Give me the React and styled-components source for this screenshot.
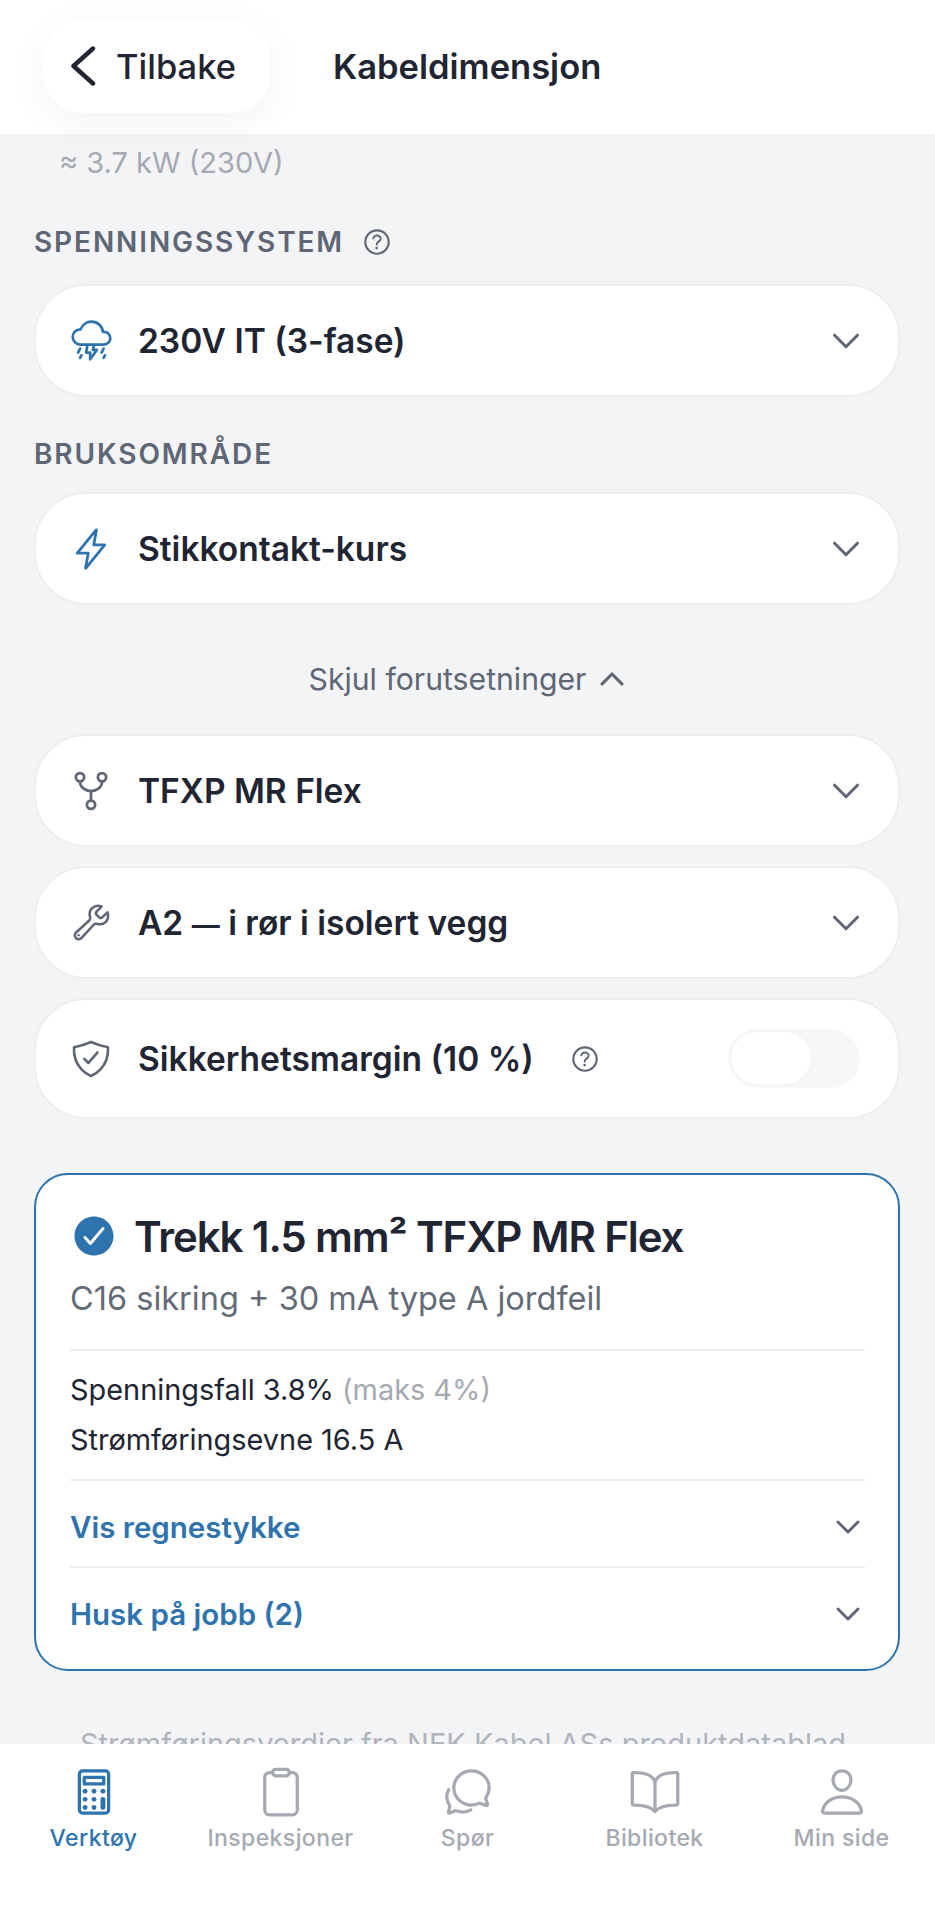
import React from 'react';
import styled, { createGlobalStyle } from 'styled-components';
import { ChevronDown, ChevronUp } from 'lucide-react';
import {
  IoBookOutline,
  IoBuildOutline,
  IoCalculatorOutline,
  IoChatbubblesOutline,
  IoCheckmarkCircle,
  IoClipboardOutline,
  IoFlashOutline,
  IoGitNetworkOutline,
  IoHelpCircleOutline,
  IoPersonOutline,
  IoShieldCheckmarkOutline,
  IoThunderstormOutline,
} from 'react-icons/io5';

const INK = '#1f2533';
const BLUE = '#2e73ae';
const SLATE = '#5f6675';
const MUTED = '#a5a9b2';
const LINE = '#eceef0';

const GlobalStyle = createGlobalStyle`
  html, body { margin: 0; padding: 0; background: #f3f4f6; }
  * { box-sizing: border-box; }
  body { font-family: Inter, "Liberation Sans", sans-serif; }
`;

const Screen = styled.div`
  width: 935px;
  height: 1920px;
  display: flex;
  flex-direction: column;
  overflow: hidden;
  background: #f3f4f6;
`;

const Header = styled.header`
  position: relative;
  z-index: 2;
  flex: 0 0 134px;
  background: #fff;
  display: flex;
  align-items: flex-start;
  padding: 19px 0 0 43px;
`;

const BackButton = styled.div`
  width: 228px;
  height: 94px;
  border-radius: 40px;
  background: #fff;
  box-shadow: 0 10px 40px rgba(30, 40, 60, 0.05);
  display: flex;
  align-items: center;
  padding-left: 27px;
  gap: 20px;
  color: ${INK};
  font-size: 34.5px;
  font-weight: 500;
`;

const Title = styled.h1`
  margin: 0 0 0 62px;
  height: 94px;
  display: flex;
  align-items: center;
  font-size: 34.5px;
  font-weight: 600;
  color: ${INK};
`;

const Content = styled.main`
  flex: 1;
  min-height: 0;
  overflow: hidden;
  padding: 0 35px 0 34px;
`;

const PowerHint = styled.div`
  margin-top: 11px;
  padding-left: 25px;
  font-size: 29px;
  line-height: 36px;
  color: ${MUTED};
`;

const SectionLabel = styled.div`
  display: flex;
  align-items: center;
  gap: 16px;
  margin-top: ${(p) => p.$top}px;
  margin-bottom: ${(p) => p.$bottom}px;
  font-size: 28px;
  line-height: 36px;
  font-weight: 600;
  letter-spacing: 1.9px;
  color: ${SLATE};
`;

const Card = styled.div`
  height: ${(p) => p.$height || 113}px;
  margin-bottom: 19px;
  background: #fff;
  border: 2px solid ${LINE};
  border-radius: 52px;
  display: flex;
  align-items: center;
  padding: 0 29px 0 32px;
`;

const CardIcon = styled.span`
  flex: 0 0 46px;
  display: flex;
  justify-content: center;
  margin-right: 24px;
  color: ${(p) => p.$color || SLATE};
`;

const CardLabel = styled.span`
  font-size: 33.5px;
  font-weight: 600;
  color: ${INK};
`;

const Dash = styled.span`
  font-size: 28px;
`;

const ChevronSlot = styled.span`
  margin-left: auto;
  margin-right: ${(p) => p.$shift || 0}px;
  display: flex;
  color: ${SLATE};
`;

const HelpSlot = styled.span`
  display: flex;
  margin-left: 34px;
  color: ${SLATE};
`;

const Toggle = styled.div`
  margin-left: auto;
  margin-right: 9px;
  width: 132px;
  height: 59px;
  border-radius: 30px;
  background: #f6f7f9;
  padding: 2px;
`;

const ToggleThumb = styled.div`
  width: 82px;
  height: 54px;
  border-radius: 27px;
  background: #fff;
  border: 1px solid #f2f3f5;
`;

const Disclosure = styled.div`
  margin: 54px 0 35px;
  height: 40px;
  padding-left: 7px;
  display: flex;
  justify-content: center;
  align-items: center;
  gap: 6px;
  font-size: 30.2px;
  color: ${SLATE};
`;

const Result = styled.section`
  margin-top: 54px;
  border: 2px solid ${BLUE};
  border-radius: 34px;
  background: #fff;
  padding: 34px 33px 37px 34px;
`;

const ResultHead = styled.div`
  display: flex;
  align-items: center;
  gap: 16px;
  height: 54px;
  color: ${BLUE};
`;

const ResultTitle = styled.h2`
  margin: 0;
  font-size: 42px;
  font-weight: 600;
  letter-spacing: -1.1px;
  color: ${INK};
`;

const ResultSub = styled.p`
  margin: 16px 0 30px;
  font-size: 32.5px;
  line-height: 40px;
  color: #646b78;
`;

const Facts = styled.div`
  border-top: 2px solid ${LINE};
  border-bottom: 2px solid ${LINE};
  padding: 21px 0;
  display: flex;
  flex-direction: column;
  gap: 14px;
`;

const Fact = styled.div`
  font-size: 28.9px;
  line-height: 36px;
  color: ${INK};
`;

const FactNote = styled.span`
  color: ${MUTED};
`;

const Expander = styled.div`
  display: flex;
  align-items: center;
  height: ${(p) => (p.$last ? 64 : 87)}px;
  padding-top: 28px;
  padding-bottom: ${(p) => (p.$last ? 0 : 21)}px;
  border-bottom: ${(p) => (p.$last ? '0' : `2px solid ${LINE}`)};
  font-size: 29.5px;
  line-height: 36px;
  font-weight: 600;
  color: ${BLUE};
`;

const SourceNote = styled.p`
  margin: 55px 0 0;
  padding-right: 8px;
  text-align: center;
  font-size: 29px;
  line-height: 36px;
  color: #b0b4bc;
  white-space: nowrap;
`;

const BottomNav = styled.nav`
  flex: 0 0 176px;
  background: #fff;
  display: grid;
  grid-template-columns: repeat(5, 187px);
`;

const NavItem = styled.div`
  display: flex;
  flex-direction: column;
  align-items: center;
  padding-top: 22px;
  gap: 4px;
  color: ${(p) => (p.$active ? BLUE : MUTED)};
  font-size: 23px;
  line-height: 32px;
  font-weight: 500;
  letter-spacing: 0.4px;
`;

const NAV = [
  { label: 'Verktøy', Icon: IoCalculatorOutline, active: true },
  { label: 'Inspeksjoner', Icon: IoClipboardOutline },
  { label: 'Spør', Icon: IoChatbubblesOutline },
  { label: 'Bibliotek', Icon: IoBookOutline },
  { label: 'Min side', Icon: IoPersonOutline },
];

function BackChevron() {
  return (
    <svg width="26" height="40" viewBox="0 0 26 40" fill="none">
      <path d="M23 2.5 3.5 20 23 37.5" stroke={INK} strokeWidth="4.4" strokeLinecap="round" strokeLinejoin="round" />
    </svg>
  );
}

function SelectCard({ icon, label, color }) {
  return (
    <Card>
      <CardIcon $color={color}>{icon}</CardIcon>
      <CardLabel>{label}</CardLabel>
      <ChevronSlot>
        <ChevronDown size={46} strokeWidth={1.6} />
      </ChevronSlot>
    </Card>
  );
}

function ExpanderRow({ label, last }) {
  return (
    <Expander $last={last}>
      {label}
      <ChevronSlot $shift={-3}>
        <ChevronDown size={40} strokeWidth={1.7} />
      </ChevronSlot>
    </Expander>
  );
}

export default function App() {
  return (
    <>
      <GlobalStyle />
      <Screen>
        <Header>
          <BackButton>
            <BackChevron />
            Tilbake
          </BackButton>
          <Title>Kabeldimensjon</Title>
        </Header>

        <Content>
          <PowerHint>≈ 3.7 kW (230V)</PowerHint>

          <SectionLabel $top={43} $bottom={24}>
            SPENNINGSSYSTEM
            <IoHelpCircleOutline size={34} />
          </SectionLabel>
          <SelectCard color={BLUE} icon={<IoThunderstormOutline size={43} />} label="230V IT (3-fase)" />

          <SectionLabel $top={39} $bottom={20}>
            BRUKSOMRÅDE
          </SectionLabel>
          <SelectCard color={BLUE} icon={<IoFlashOutline size={44} />} label="Stikkontakt-kurs" />

          <Disclosure>
            Skjul forutsetninger
            <ChevronUp size={40} strokeWidth={1.9} />
          </Disclosure>

          <SelectCard icon={<IoGitNetworkOutline size={44} />} label="TFXP MR Flex" />
          <SelectCard
            icon={<IoBuildOutline size={41} />}
            label={
              <>
                A2 <Dash>—</Dash> i rør i isolert vegg
              </>
            }
          />

          <Card $height={121}>
            <CardIcon>
              <IoShieldCheckmarkOutline size={42} />
            </CardIcon>
            <CardLabel>Sikkerhetsmargin (10 %)</CardLabel>
            <HelpSlot>
              <IoHelpCircleOutline size={34} />
            </HelpSlot>
            <Toggle>
              <ToggleThumb />
            </Toggle>
          </Card>

          <Result>
            <ResultHead>
              <IoCheckmarkCircle size={48} />
              <ResultTitle>Trekk 1.5 mm² TFXP MR Flex</ResultTitle>
            </ResultHead>
            <ResultSub>C16 sikring + 30 mA type A jordfeil</ResultSub>
            <Facts>
              <Fact>
                Spenningsfall 3.8% <FactNote>(maks 4%)</FactNote>
              </Fact>
              <Fact>Strømføringsevne 16.5 A</Fact>
            </Facts>
            <ExpanderRow label="Vis regnestykke" />
            <ExpanderRow label="Husk på jobb (2)" last />
          </Result>

          <SourceNote>Strømføringsverdier fra NEK Kabel ASs produktdatablad</SourceNote>
        </Content>

        <BottomNav>
          {NAV.map(({ label, Icon, active }) => (
            <NavItem key={label} $active={active}>
              <Icon size={52} />
              {label}
            </NavItem>
          ))}
        </BottomNav>
      </Screen>
    </>
  );
}
